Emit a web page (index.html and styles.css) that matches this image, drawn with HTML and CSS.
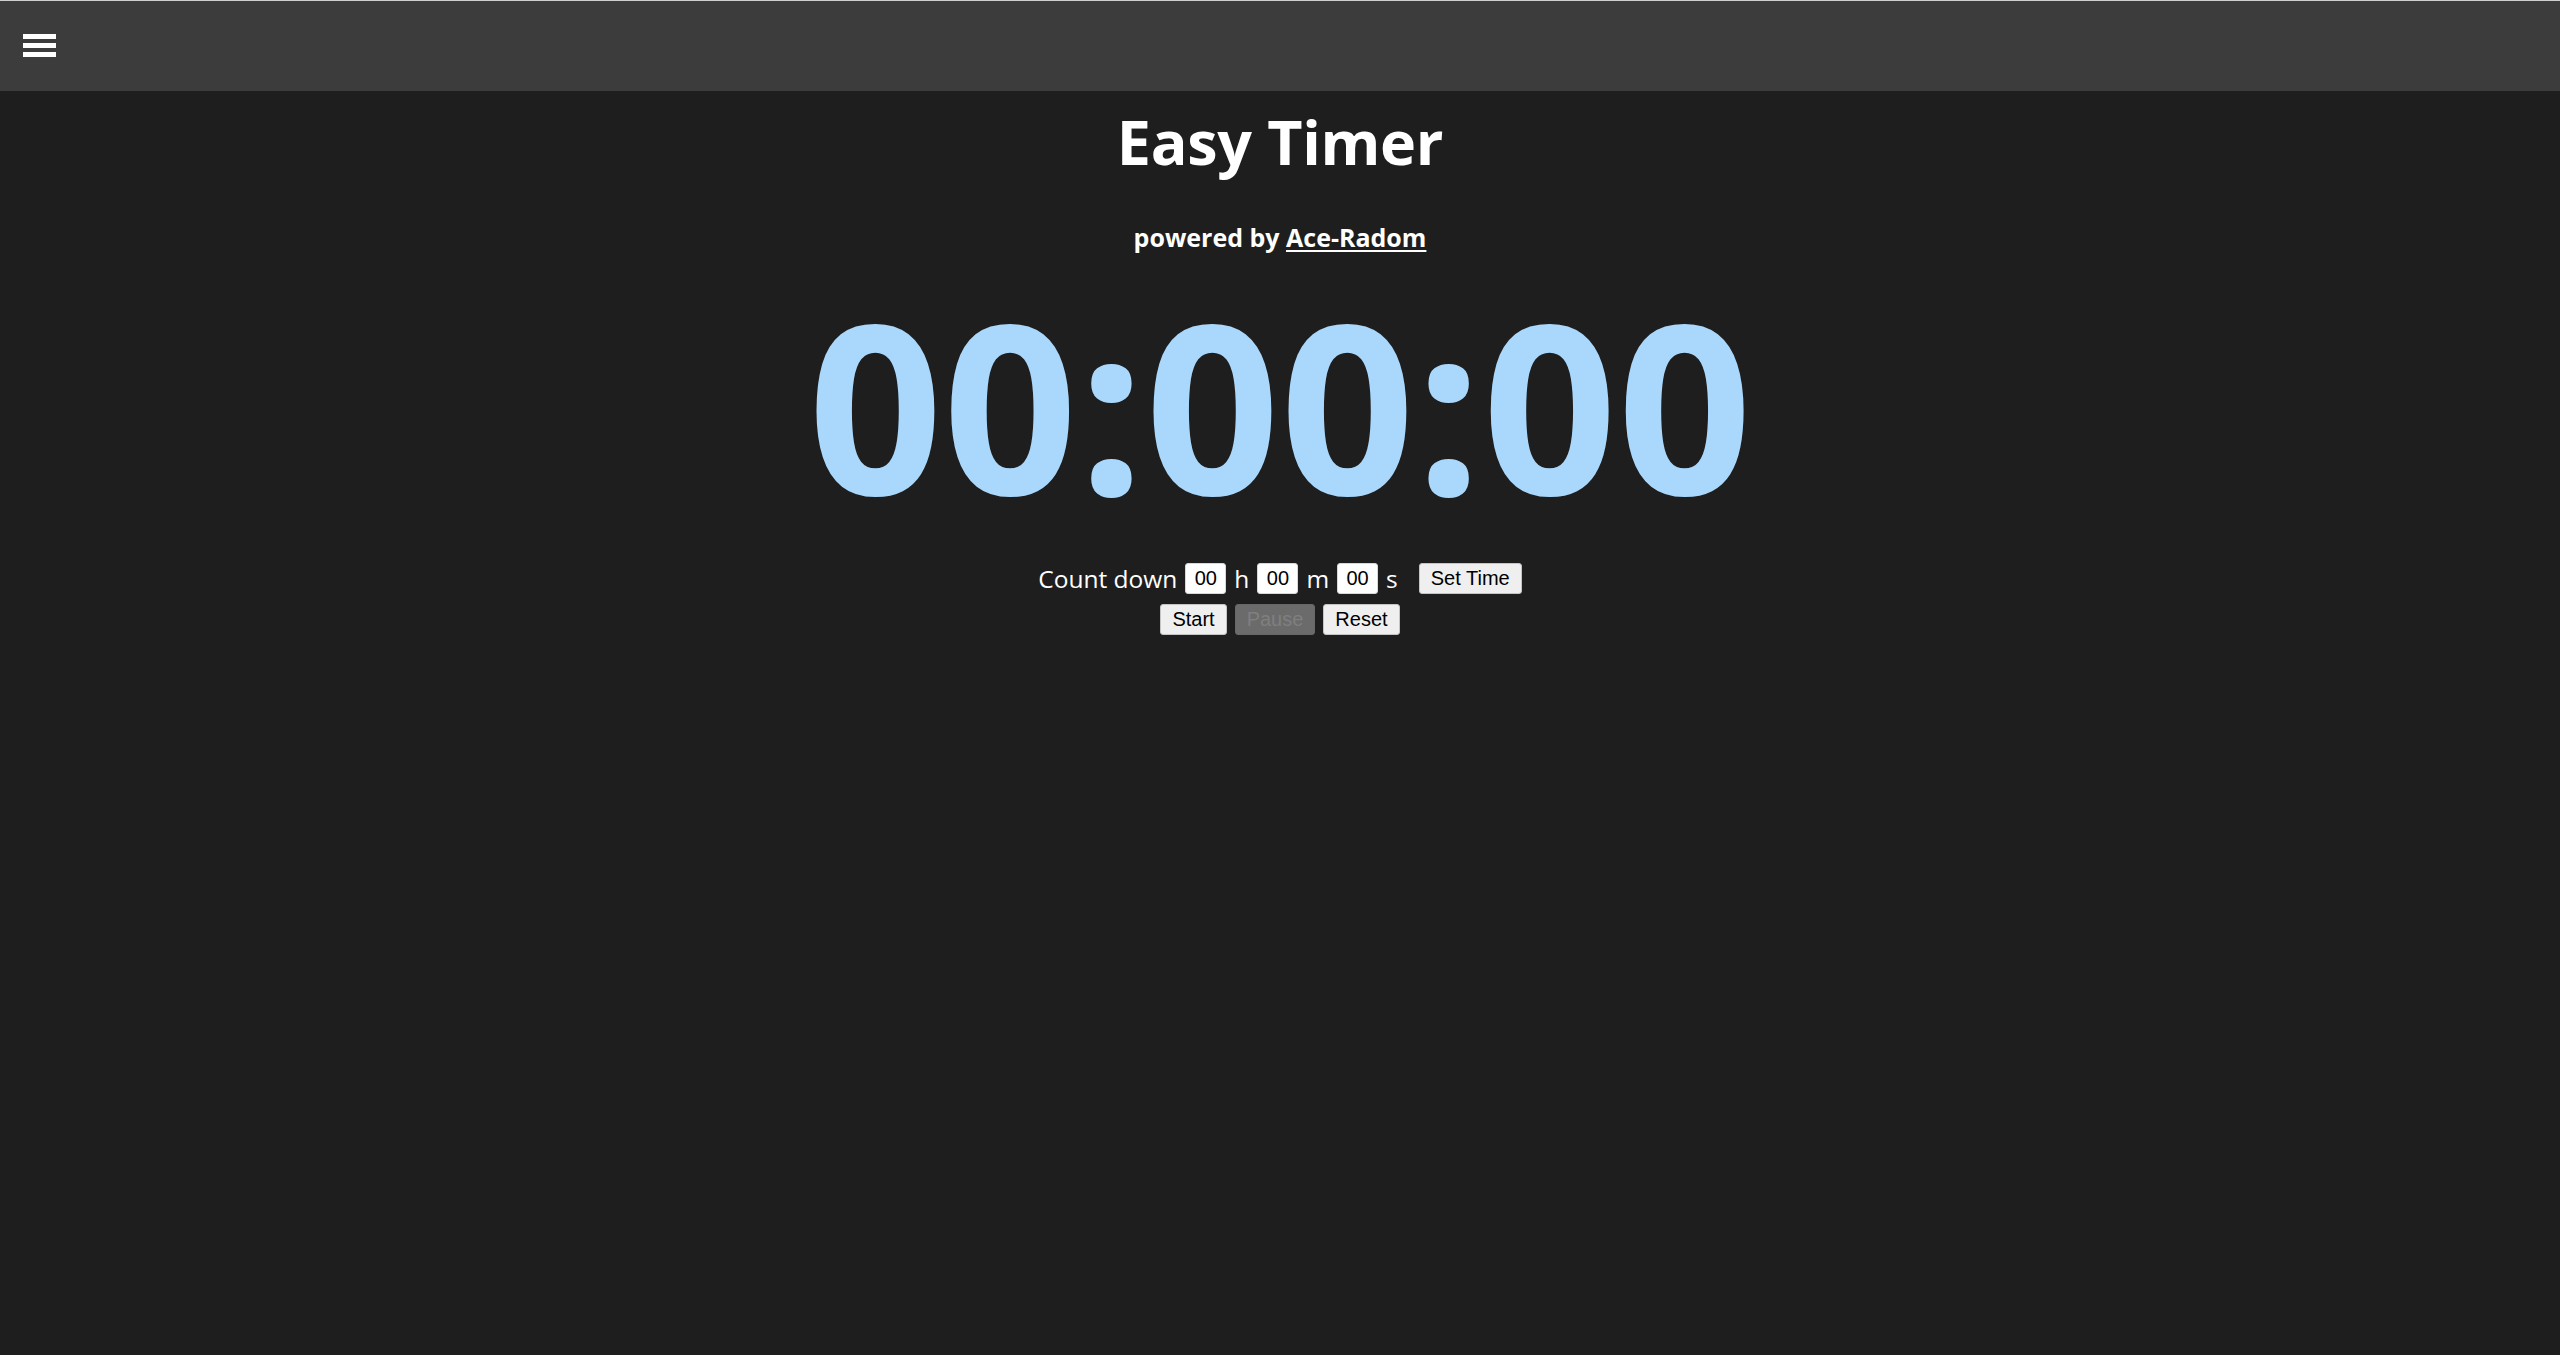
FILE: index.html
```html
<!DOCTYPE html>
<html lang="en">
<head>
<meta charset="utf-8">
<title>Easy Timer</title>
<link rel="stylesheet" href="styles.css">
</head>
<body>
<header class="topbar">
  <div class="menu-btn" aria-label="menu">
    <span class="bar"></span>
    <span class="bar"></span>
    <span class="bar"></span>
  </div>
</header>
<main class="main">
  <h1 class="title">Easy Timer</h1>
  <p class="powered">powered by <a class="link" href="#">Ace-Radom</a></p>
  <div class="clock">00:00:00</div>
  <div class="row row-set">
    <span class="label">Count down</span>
    <input class="num" type="text" value="00">
    <span class="label">h</span>
    <input class="num" type="text" value="00">
    <span class="label">m</span>
    <input class="num" type="text" value="00">
    <span class="label">s</span>
    <button class="btn btn-set">Set Time</button>
  </div>
  <div class="row row-ctrl">
    <button class="btn">Start</button>
    <button class="btn" disabled>Pause</button>
    <button class="btn">Reset</button>
  </div>
</main>
</body>
</html>
```
FILE: styles.css
```css
html, body {
  margin: 0;
  padding: 0;
  background: #1e1e1e;
  color: #ffffff;
  font-family: "Open Sans", "Noto Sans", sans-serif;
}
.topbar {
  height: 90px;
  border-top: 1px solid #cfcfcf;
  background: #3c3c3c;
  box-sizing: content-box;
  display: flex;
  align-items: flex-start;
}
.menu-btn {
  margin-left: 23px;
  margin-top: 33px;
  display: flex;
  flex-direction: column;
  gap: 4px;
}
.bar {
  display: block;
  width: 33px;
  height: 5px;
  background: #ffffff;
}
.main {
  display: flex;
  flex-direction: column;
  align-items: center;
}
.title {
  margin: 14px 0 0 0;
  font-size: 61px;
  line-height: 74px;
  font-weight: 700;
  letter-spacing: -0.3px;
}
.powered {
  margin: 43px 0 0 0;
  font-size: 25px;
  line-height: 30px;
  font-weight: 700;
}
.link {
  color: #ffffff;
  text-decoration: underline;
  text-underline-offset: 3px;
}
.clock {
  margin-top: 34px;
  font-size: 236px;
  line-height: 236px;
  font-weight: 700;
  color: #aad8fc;
}
.row {
  display: flex;
  align-items: center;
  gap: 8px;
}
.row-set {
  margin-top: 41px;
  height: 31px;
}
.row-ctrl {
  margin-top: 10px;
  gap: 8px;
}
.label {
  font-size: 24.5px;
  line-height: 31px;
}
.num {
  box-sizing: border-box;
  width: 41px;
  height: 31px;
  margin: 0;
  padding: 0;
  border: 1px solid #d8d8d8;
  border-radius: 3px;
  background: #ffffff;
  color: #000000;
  font-family: "Liberation Sans", Arial, sans-serif;
  font-size: 20px;
  text-align: center;
}
.btn {
  box-sizing: border-box;
  height: 31px;
  margin: 0;
  padding: 0 11px;
  border: 1px solid #c4c4c4;
  border-radius: 3px;
  background: #efefef;
  color: #000000;
  font-family: "Liberation Sans", Arial, sans-serif;
  font-size: 20px;
  line-height: 29px;
}
.btn:disabled {
  background: #6b6b6b;
  border-color: #676767;
  color: #7f7f7f;
}
.btn-set {
  margin-left: 13px;
}
```
